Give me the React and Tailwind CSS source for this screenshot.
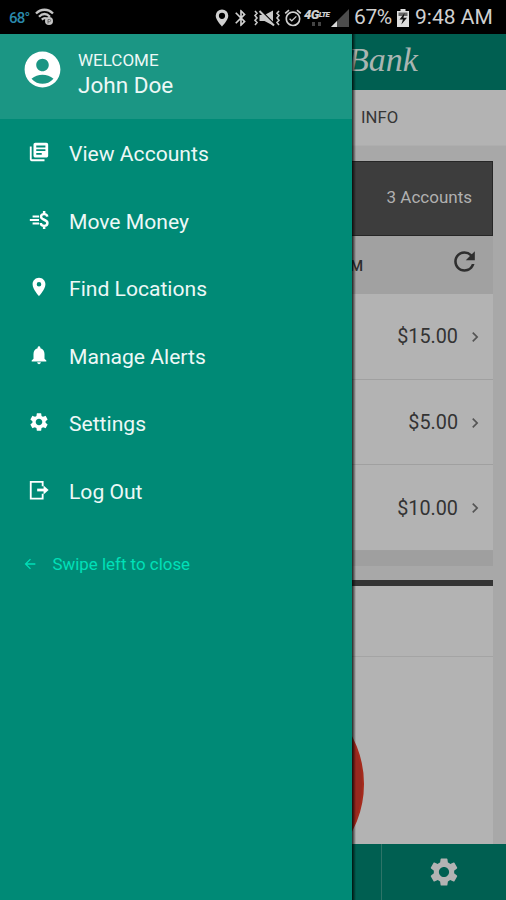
import React from 'react'
import {
  MdAccountCircle,
  MdAlarmOn,
  MdArrowBack,
  MdBluetooth,
  MdChevronRight,
  MdLibraryBooks,
  MdLocationOn,
  MdNotifications,
  MdRefresh,
  MdSettings
} from 'react-icons/md'

const accounts = [
  { id: 1, balance: '$15.00' },
  { id: 2, balance: '$5.00' },
  { id: 3, balance: '$10.00' }
]

const menu = [
  { label: 'View Accounts', icon: MdLibraryBooks },
  { label: 'Move Money', icon: MoveMoneyIcon },
  { label: 'Find Locations', icon: MdLocationOn },
  { label: 'Manage Alerts', icon: MdNotifications },
  { label: 'Settings', icon: MdSettings },
  { label: 'Log Out', icon: LogOutIcon }
]

function MoveMoneyIcon({ className }) {
  return (
    <svg viewBox="0 0 24 24" fill="none" stroke="currentColor" className={className}>
      <path d="M5 8.200h7M2 12h10M5 15.800h7" strokeWidth="2" />
      <path d="M21 8.300C20.800 6.400 19.400 5.600 17.600 5.600c-2 0-3.400 1-3.400 2.800 0 4 7 2.600 7 6.900 0 1.900-1.500 3.100-3.600 3.100s-3.600-1.200-3.700-3.100M17.600 2.200v3.300M17.600 18.400v3.400" strokeWidth="2.7" />
    </svg>
  )
}

function LogOutIcon({ className }) {
  return (
    <svg viewBox="0 0 24 24" fill="none" stroke="currentColor" className={className}>
      <path d="M16 8V3.2H3v18.2h13V16" strokeWidth="2" />
      <path d="M10 12h8" strokeWidth="3" />
      <path d="M17 7v10l5.5-5z" fill="currentColor" stroke="none" />
    </svg>
  )
}

function WifiIcon() {
  return (
    <svg viewBox="0 0 20 18" fill="none" stroke="#c4c4c4" className="w-5 h-[18px] ml-1.5 mb-0.5">
      <path d="M1 5.500C6 .5 13 .5 18 5.500M4 8.700c3.500-3.500 7.500-3.500 11 0M6.800 11.600c1.700-1.600 3.300-1.900 5-1" strokeWidth="2.300" />
      <circle cx="14" cy="13" r="4" fill="#c4c4c4" stroke="none" />
      <path d="M13 15.500v-4h1.500a1 1 0 0 1 0 2.200H13" stroke="#666" strokeWidth="1" />
    </svg>
  )
}

function PinIcon() {
  return (
    <svg viewBox="0 0 14 18" className="w-3.5 h-[18px] ml-[3px]">
      <path
        fillRule="evenodd"
        d="M7 .5A6.300 6.300 0 0 0 .7 6.800C.7 11 7 17.500 7 17.500s6.300-6.500 6.300-10.700A6.300 6.300 0 0 0 7 .5zM7 3.700a3.100 3.100 0 1 1 0 6.200 3.100 3.100 0 0 1 0-6.200z"
        fill="#d0d0d0"
      />
    </svg>
  )
}

function VibrateMuteIcon() {
  return (
    <svg viewBox="0 0 28 18" fill="none" stroke="#c8c8c8" className="w-7 h-[18px] ml-0.5">
      <path d="M2 2l2 2.300-2 2.300 2 2.400-2 2.300 2 2.300-2 2.300M26 2l-2 2.300 2 2.300-2 2.400 2 2.300-2 2.300 2 2.300" strokeWidth="1.600" />
      <path d="M6.500 6h5L20 1.500v15L11.500 12h-5z" fill="#c8c8c8" stroke="none" />
      <path d="M8 1.500l14 14" stroke="#000" strokeWidth="1.500" />
      <path d="M6.500 2l14.500 14.500" strokeWidth="2" />
    </svg>
  )
}

function BatteryIcon() {
  return (
    <svg viewBox="0 0 12 18" className="w-3 h-[18px] ml-1">
      <path d="M3.500 0h5v2H12v16H0V2h3.500z" fill="#dedede" />
      <path d="M1.500 3.500h9v3.500h-9z" fill="#666" />
      <path d="M7.600 4L2.500 10.500H6L4.300 15.500 10 8.700H6.500z" fill="#111" />
    </svg>
  )
}

function StatusBar() {
  return (
    <div className="h-[34px] shrink-0 bg-black flex items-center pt-0.5 pl-[9px] text-[#d0d0d0]">

      <span className="w-5 text-[15px] tracking-[-0.8px] font-medium text-[#2a89ac]">68°</span>
      <WifiIcon />

      <div className="flex items-center ml-auto w-[294px]">
        <PinIcon />
        <MdBluetooth className="w-5 h-5 ml-0.5" />
        <VibrateMuteIcon />
        <MdAlarmOn className="w-5 h-5 ml-0.5" />

        <div className="flex flex-col items-center w-[25px] ml-px">
          <span className="flex items-center font-black italic text-[13px] leading-[10px] tracking-[-0.5px]">
            4G
            <span className="text-[8px] leading-[8px] tracking-[-0.8px]">LTE</span>
          </span>
          <span className="flex gap-[3px] mt-0.5">
            <span className="w-[3px] h-1 bg-[#444]" />
            <span className="w-[3px] h-1 bg-[#444]" />
          </span>
        </div>

        <svg viewBox="0 0 18 18" className="w-[18px] h-[18px] ml-0.5">
          <path d="M0 18L18 0v18z" fill="#4c4c4c" />
          <path d="M0 18l6-6v6z" fill="#d8d8d8" />
        </svg>

        <span className="ml-[5px] text-[21px] w-[39px] whitespace-nowrap tracking-[-0.4px]">67%</span>
        <BatteryIcon />
        <span className="ml-[6px] text-[21px] whitespace-nowrap">9:48 AM</span>
      </div>
    </div>
  )
}

function AccountsPage() {
  return (
    <div className="flex-1 min-h-0 flex flex-col bg-[#a8a8a8]">

      <header className="h-14 shrink-0 bg-[#005f51] pl-[348px] flex items-center">
        <h1 className="font-['Liberation_Serif',serif] italic text-[34px] leading-[34px] text-[#aab5b2] pb-1">
          Bank
        </h1>
      </header>

      <div className="h-14 shrink-0 bg-[#b3b3b3] pl-[361px] flex items-center text-[16.7px] text-[#363636] border-b border-[#aeaeae]">
        INFO
      </div>

      <section className="mt-[15px] mr-[13px] shrink-0">
        <div className="h-[75px] bg-[#3d3d3d] border border-[#262626] flex items-center justify-end pr-5 pb-0.5 text-[17px] text-[#b0b0b0]">
          3 Accounts
        </div>

        <div className="h-[58px] bg-[#a1a1a1] flex items-center justify-between pl-[350px] pr-[13px] text-[#2e2e2e]">
          <span className="text-[15px] font-medium pt-0.5">M</span>
          <MdRefresh className="w-[31px] h-[31px] mb-[7px]" />
        </div>

        {accounts.map(a => (
          <div
            key={a.id}
            className="h-[85.6px] bg-[#b3b3b3] border-b border-[#a0a0a0] flex items-center justify-end pt-0.5 pr-2 text-[19.8px] text-[#333]"
          >
            {a.balance}
            <MdChevronRight className="w-5 h-5 ml-[7px] text-[#555]" />
          </div>
        ))}

        <div className="h-[15px] bg-[#9f9f9f]" />
      </section>

      <section className="mt-[14px] mr-[13px] flex-1 min-h-0 flex flex-col bg-[#b3b3b3]">
        <div className="h-[6px] shrink-0 bg-[#343434]" />
        <div className="h-[71px] shrink-0 border-b border-[#a4a4a4]" />
        <div className="flex-1 min-h-0 pl-[160px] pt-[25px] overflow-hidden">
          <svg viewBox="0 0 204 204" className="w-[204px] h-[204px]">
            <circle cx="102" cy="102" r="101" fill="#98291f" stroke="#a52a1c" strokeWidth="2" />
          </svg>
        </div>
      </section>

      <nav className="h-14 shrink-0 bg-[#005f51] flex">
        <div className="w-[382px] border-r border-[#2d7468]" />
        <div className="flex-1 flex items-center justify-center">
          <MdSettings className="w-[34px] h-[34px] text-[#b3b3b3]" />
        </div>
      </nav>
    </div>
  )
}

function Drawer() {
  return (
    <aside className="absolute left-0 top-[34px] bottom-0 w-[352px] bg-[#008a76] text-[#edf8f6]">

      <div className="h-[85px] bg-[#1b9684] flex items-start pl-[21px] pt-[14px]">
        <MdAccountCircle className="w-[43px] h-[43px] text-white" />
        <div className="ml-[14px] pt-px">
          <p className="text-[17px] leading-[23px]">WELCOME</p>
          <p className="text-[22.5px] leading-[27px]">John Doe</p>
        </div>
      </div>

      <ul className="pt-[1.5px]">
        {menu.map(({ label, icon: Icon }) => (
          <li key={label} className="h-[67.5px] flex items-center pl-7">
            <Icon className="w-[22px] h-[22px] mb-1 text-white" />
            <span className="ml-[19px] text-[21.1px]">{label}</span>
          </li>
        ))}
      </ul>

      <p className="flex items-center pl-[22px] mt-[26.5px] text-[16.9px] text-[#00e0b8]">
        <MdArrowBack className="w-4 h-4 mb-0.5" />
        <span className="ml-[14.5px]">Swipe left to close</span>
      </p>

      {/* edge shadow over the page behind */}
      <div className="absolute left-full top-0 bottom-0 w-1 bg-linear-to-r from-black/80 to-transparent" />
    </aside>
  )
}

export default function App() {
  return (
    <div className="relative w-[506px] h-[900px] flex flex-col overflow-hidden font-[Roboto,sans-serif]">
      <StatusBar />
      <AccountsPage />
      <Drawer />
    </div>
  )
}
